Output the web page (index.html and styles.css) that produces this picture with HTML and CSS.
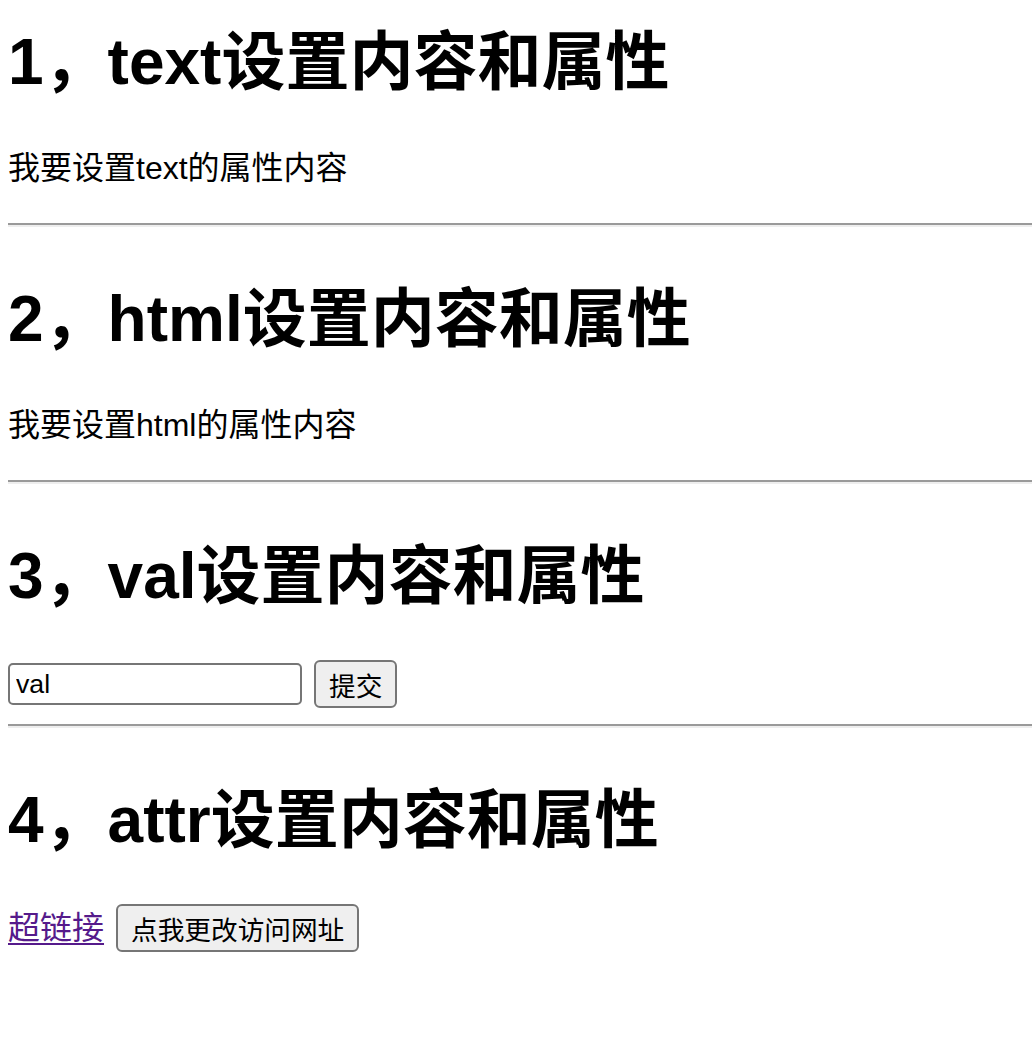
FILE: index.html
```html
<!DOCTYPE html>
<html lang="zh-CN">
<head>
<meta charset="utf-8">
<title>设置内容和属性</title>
<link rel="stylesheet" href="styles.css">
</head>
<body>
<div class="page">
  <h1 class="title first">1，text设置内容和属性</h1>
  <p class="para">我要设置text的属性内容</p>
  <hr class="rule">
  <h1 class="title">2，html设置内容和属性</h1>
  <p class="para">我要设置html的属性内容</p>
  <hr class="rule">
  <h1 class="title">3，val设置内容和属性</h1>
  <div class="row">
    <input class="field" type="text" value="val">
    <button class="btn">提交</button>
  </div>
  <hr class="rule">
  <h1 class="title">4，attr设置内容和属性</h1>
  <div class="row">
    <a class="link" href="#">超链接</a>
    <button class="btn">点我更改访问网址</button>
  </div>
</div>
</body>
</html>
```
FILE: styles.css
```css
html, body {
  margin: 0;
  padding: 0;
  background: #fff;
}
body {
  font-family: "Liberation Sans", "Noto Sans CJK SC", sans-serif;
  color: #000;
}
.page {
  padding: 13px 0 0 8px;
}
.title {
  font-size: 64px;
  font-weight: bold;
  line-height: 90px;
  margin: 47px 0 39px 0;
}
.title.first {
  margin-top: 4px;
}
.para {
  font-size: 32px;
  line-height: 45px;
  margin: 32px 0;
}
.rule {
  height: 0;
  margin: 16px 0;
  border: none;
  border-top: 2px solid #9a9a9a;
  border-bottom: 2px solid #eeeeee;
}
.row {
  font-size: 32px;
  line-height: 48px;
  display: flex;
  align-items: center;
  gap: 12px;
}
.field {
  box-sizing: border-box;
  width: 294px;
  height: 42px;
  margin: 0;
  padding: 2px 6px;
  font-family: "Liberation Sans", "Noto Sans CJK SC", sans-serif;
  font-size: 26.67px;
  color: #000;
  border: 2px solid #767676;
  border-radius: 5px;
  background: #fff;
}
.btn {
  box-sizing: border-box;
  height: 48px;
  margin: 0;
  padding: 0 13px;
  font-family: "Liberation Sans", "Noto Sans CJK SC", sans-serif;
  font-size: 26.67px;
  color: #000;
  background: #efefef;
  border: 2px solid #767676;
  border-radius: 6px;
}
.link {
  color: #551a8b;
  text-decoration: underline;
  text-decoration-thickness: 2px;
  text-underline-offset: 4px;
}
```
